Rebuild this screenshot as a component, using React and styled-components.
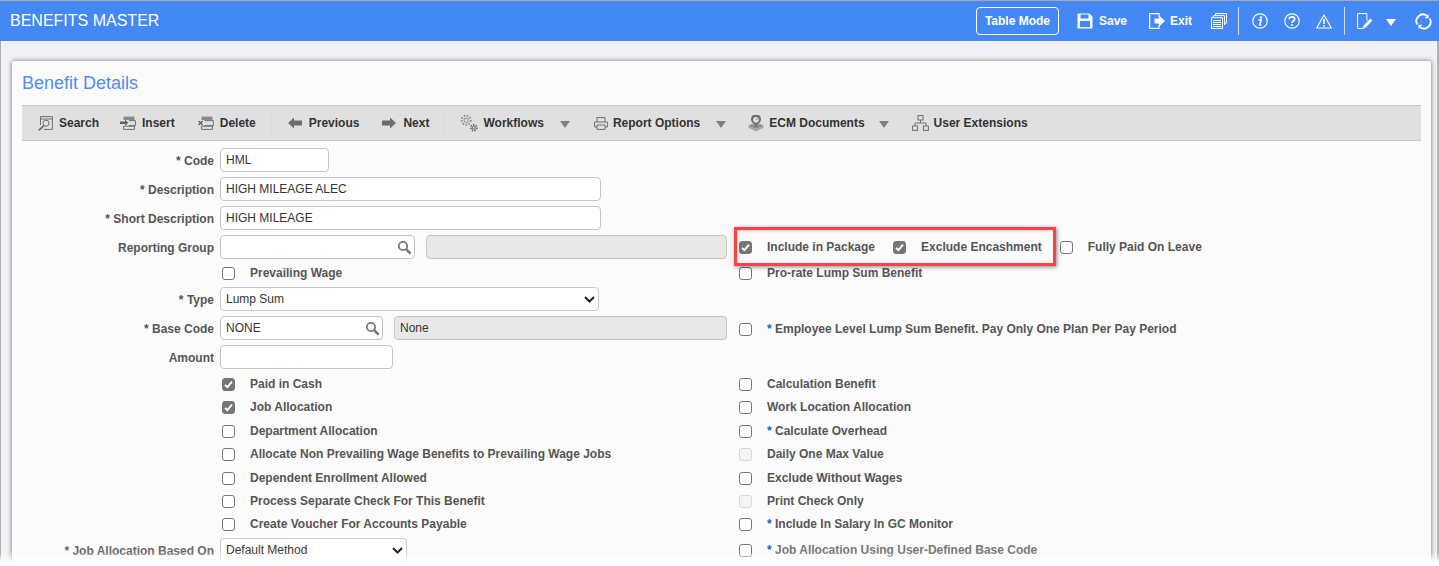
import React from "react";
import styled, { createGlobalStyle } from "styled-components";

const Global = createGlobalStyle`
  html, body { margin: 0; padding: 0; height: 100%; background: #f0f2f5; overflow: hidden; }
  body { font-family: "Liberation Sans", Arial, sans-serif; }
`;
const Page = styled.div`
  width: 1439px; height: 566px; overflow: hidden; position: relative;
  border-top: 1px solid #a8a8a8; box-sizing: border-box; background: #f0f2f5;
  box-shadow: inset 1px 0 #b0b0b0, inset -2px 0 #b0b0b0;
  &::after {
    content: ""; position: absolute; left: 0; right: 0; bottom: 0; height: 14px;
    background: linear-gradient(to bottom, rgba(255,255,255,0), #fff 75%);
  }
`;
const Header = styled.header`
  height: 40px; background: #4388f5; display: flex; align-items: center;
  padding: 0 7px 0 10px; color: #fff;
`;
const AppTitle = styled.h1`
  margin: 0; font-size: 16px; font-weight: 400; flex: 1;
`;
const TableButton = styled.button`
  height: 28px; width: 83px; box-sizing: border-box; border: 1px solid #fff; border-radius: 4px;
  background: transparent; color: #fff; font: bold 12px "Liberation Sans", Arial, sans-serif; padding: 0;
`;
const HeadAction = styled.span`
  display: inline-flex; align-items: center; gap: ${p => p.$gap ?? 6}px; margin-left: ${p => p.$ml ?? 0}px;
  font-size: 12px; font-weight: bold;
`;
const HeadSep = styled.span`
  width: 1px; height: 28px; background: #c9dafb; margin-left: ${p => p.$ml}px;
`;
const Card = styled.main`
  position: absolute; left: 12px; top: 60px; width: 1419px; height: 520px; box-sizing: border-box;
  background: #fbfbfb; border-radius: 2px; box-shadow: 0 0 5px rgba(0,0,0,.55); padding: 0 10px;
`;
const CardTitle = styled.h2`
  margin: 0; height: 44px; display: flex; align-items: center; font-size: 18px; font-weight: 400; color: #4f8bf7;
`;
const Toolbar = styled.nav`
  height: 36px; box-sizing: border-box; background: #e0e0e0; border-top: 1px solid #c6c6c6; border-bottom: 1px solid #c6c6c6;
  display: flex; align-items: center; padding-left: 16px; font-size: 12px; font-weight: bold; color: #333;
`;
const ToolItem = styled.span`
  display: inline-flex; align-items: center; gap: ${p => p.$gap ?? 6}px; margin-left: ${p => p.$ml ?? 0}px; white-space: nowrap;
`;
const ToolSep = styled.span`
  width: 1px; height: 32px; background: #d5dde6; margin-left: 15px;
`;
const Caret = styled.span`
  width: 0; height: 0; border-left: 5.5px solid transparent; border-right: 5.5px solid transparent;
  border-top: 7px solid ${p => p.$color || "#808080"}; margin-left: ${p => p.$ml}px; margin-top: 2px;
`;
const Form = styled.section`
  padding-top: 5px;
`;
const Row = styled.div`
  height: ${p => p.$h}px; display: grid; grid-template-columns: 192px 507px 1fr; column-gap: 6px; align-items: center;
`;
const Label = styled.label`
  text-align: right; font-size: 12px; font-weight: bold; color: ${p => p.$faded ? "#6a6a6a" : "#555"};
  white-space: nowrap; padding-top: 2px;
`;
const Star = styled.span`
  color: ${p => p.$blue ? "#1a5fc8" : "inherit"};
`;
const Field = styled.div`
  display: flex; align-items: center; gap: 11px; min-width: 0;
`;
const Input = styled.div`
  box-sizing: border-box; height: 24px; width: ${p => p.$w}px; flex: ${p => p.$w ? "none" : 1};
  border: 1px solid #c4c4c4; border-radius: 4px; background: ${p => p.$off ? "#e8e8e8" : "#fff"};
  font-size: 12px; color: #333; padding: 0 2px 0 5px; display: flex; align-items: center; justify-content: space-between;
  white-space: nowrap;
`;
const Select = styled.div`
  box-sizing: border-box; height: 24px; width: ${p => p.$w}px; border: 1px solid #c9c9c9; border-radius: 4px; background: #fff;
  font-size: 12px; color: #333; padding: 0 3px 0 5px; display: flex; align-items: center; justify-content: space-between;
`;
const RightCell = styled.div`
  display: flex; align-items: center; padding-left: 6px; min-width: 0; padding-top: ${p => p.$drop ?? 0}px;
`;
const Highlight = styled.div`
  display: flex; align-items: center; position: relative;
  &::after {
    content: ""; position: absolute; left: -5px; right: -14px; top: -13px; bottom: -12px;
    border: 3px solid #f9434a; box-shadow: 1px 1px 4px rgba(0,0,0,.45), inset 1px 1px 3px rgba(0,0,0,.2);
  }
`;
const CheckRow = styled.span`
  display: inline-flex; align-items: center; margin-left: ${p => p.$ml ?? 0}px;
  font-size: 12px; font-weight: bold; color: ${p => p.$dim ? "#777" : "#555"}; white-space: nowrap;
`;
const Box = styled.span`
  box-sizing: border-box; width: 13px; height: 13px; border-radius: 3px; flex: none; margin-right: 15px;
  border: 1px solid ${p => p.$checked ? "#767676" : p.$disabled ? "#d8d8d8" : "#767676"};
  background: ${p => p.$checked ? "#767676" : p.$disabled ? "#f4f4f4" : "#fff"};
  display: inline-flex; align-items: center; justify-content: center;
`;
const LeftChecks = styled.div`
  grid-column: 2; display: flex; align-items: center; padding-left: 2px;
`;

const Check = ({ checked, disabled, children, dim, ml }) => (
  <CheckRow $dim={dim} $ml={ml}>
    <Box $checked={checked} $disabled={disabled}>
      {checked && (
        <svg width="9" height="9" viewBox="0 0 9 9" fill="none"><path d="M1 4.8 3.4 7.2 8 1.6" stroke="#fff" strokeWidth="1.9" /></svg>
      )}
    </Box>
    <span>{children}</span>
  </CheckRow>
);

const Magnifier = ({ c = "#777" }) => (
  <svg width="15" height="15" viewBox="0 0 15 15" fill="none">
    <circle cx="6" cy="6" r="4.2" stroke={c} strokeWidth="1.8" /><path d="M9.3 9.3 13.6 13.6" stroke={c} strokeWidth="2.6" />
  </svg>
);
const Chevron = () => (
  <svg width="11" height="7" viewBox="0 0 11 7" fill="none"><path d="M1 1 5.5 5.5 10 1" stroke="#222" strokeWidth="2" /></svg>
);
const W = { fill: "none", stroke: "#fff", strokeWidth: 1.2 };
const SaveIcon = () => (
  <svg width="16" height="16" viewBox="0 0 16 16">
    <path d="M.5 1.5a1 1 0 0 1 1-1h11l3 3v11a1 1 0 0 1-1 1h-13a1 1 0 0 1-1-1z" fill="#fff" />
    <rect x="3.5" y="1.5" width="8" height="4" fill="#4388f5" /><rect x="3" y="8" width="10" height="6.2" fill="#4388f5" />
  </svg>
);
const ExitIcon = () => (
  <svg width="17" height="16" viewBox="0 0 17 16">
    <path d="M10 4V.7H.7v14.6H10V12" {...W} /><path d="M5.5 5.5h4.5V2.5l6 5.5-6 5.5v-3H5.5z" fill="#fff" />
  </svg>
);
const DocsIcon = () => (
  <svg width="16" height="16" viewBox="0 0 16 16" fill="none" stroke="#fff">
    <path d="M4.5 2.5V.6h11v9.5h-2" /><path d="M2.5 4V2.6h11V12" />
    <rect x=".5" y="4.6" width="11" height="10.8" fill="#4388f5" />
    <path d="M2 7.5h8M2 9.5h8M2 11.5h8M2 13.5h8" />
  </svg>
);
const InfoIcon = () => (
  <svg width="16" height="16" viewBox="0 0 16 16" fill="none">
    <circle cx="8" cy="8" r="7.2" stroke="#fff" strokeWidth="1.2" />
    <circle cx="9" cy="4.4" r="1.2" fill="#fff" /><path d="M6.4 7h2.8l-1.5 5h1.6" stroke="#fff" strokeWidth="1.5" />
  </svg>
);
const HelpIcon = () => (
  <svg width="16" height="16" viewBox="0 0 16 16" fill="none">
    <circle cx="8" cy="8" r="7.2" stroke="#fff" strokeWidth="1.2" />
    <path d="M5.3 6.2C5.3 3.2 10.7 3.2 10.7 6.1 10.7 8 8 8 8 10" stroke="#fff" strokeWidth="1.7" /><circle cx="8" cy="12" r="1.1" fill="#fff" />
  </svg>
);
const WarnIcon = () => (
  <svg width="16" height="15" viewBox="0 0 16 15" fill="none">
    <path d="M8 1 15.3 14H.7z" stroke="#fff" strokeWidth="1.1" /><path d="M8 5v5" stroke="#fff" strokeWidth="1.6" /><circle cx="8" cy="11.8" r=".9" fill="#fff" />
  </svg>
);
const EditIcon = () => (
  <svg width="16" height="16" viewBox="0 0 16 16" fill="none">
    <path d="M7 15.4H.6V.6h9.3v7" stroke="#fff" /><path d="M6 15.5 6.6 12.4 13.4 5.6 15.4 7.6 8.8 14.6z" fill="#fff" />
  </svg>
);
const RefreshIcon = () => (
  <svg width="17" height="17" viewBox="0 0 17 17" fill="none">
    <path d="M2.4 11.6A6.6 6.6 0 0 1 11.8 2.7" stroke="#fff" strokeWidth="1.8" />
    <path d="M14.6 5.4A6.6 6.6 0 0 1 5.2 14.3" stroke="#fff" strokeWidth="1.8" />
    <path d="M13.6 .9V5.3H9.6zM3.4 16.1V11.7H7.4z" fill="#fff" />
  </svg>
);
const G = { fill: "none", stroke: "#707070", strokeWidth: 1 };
const SearchTool = () => (
  <svg width="15" height="15" viewBox="0 0 15 15">
    <path d="M2.5 9V.6h11.9v12.8H6" {...G} /><path d="M2.5 3h11.9" {...G} /><circle cx="8" cy="7.2" r="3" {...G} /><path d="M5.8 9.6 .8 14.4" stroke="#707070" strokeWidth="1.8" />
  </svg>
);
const InsertTool = () => (
  <svg width="16" height="14" viewBox="0 0 16 14">
    <path d="M3.5 4V.6h11V4z" fill="#8a8a8a" /><path d="M3.5 10.2v3.2h11v-3.2z" {...G} />
    <path d="M0 5.6h5V3.8l3.4 3-3.4 3V8H0z" fill="#606060" /><path d="M9 4.6h6.4v5H9" {...G} />
  </svg>
);
const DeleteTool = () => (
  <svg width="16" height="14" viewBox="0 0 16 14">
    <path d="M3.5 4V.6h11V4z" fill="#8a8a8a" /><path d="M3.5 10.2v3.2h11v-3.2z" {...G} /><path d="M6.5 4.6h8.9v5H6.5" {...G} />
    <path d="M.6 5 4.6 9M4.6 5 .6 9" stroke="#606060" strokeWidth="1.3" />
  </svg>
);
const PrevArrow = () => (
  <svg width="14" height="12" viewBox="0 0 14 12"><path d="M0 6 6 .5V3.5h8v5H6v3z" fill="#6e6e6e" /></svg>
);
const NextArrow = () => (
  <svg width="14" height="12" viewBox="0 0 14 12"><path d="M14 6 8 .5V3.5H0v5h8v3z" fill="#6e6e6e" /></svg>
);
const Gears = () => (
  <svg width="18" height="18" viewBox="0 0 18 18" fill="none">
    <circle cx="6.2" cy="6.2" r="2.2" stroke="#8a8a8a" /><circle cx="6.2" cy="6.2" r="4.6" stroke="#8a8a8a" strokeWidth="1.8" strokeDasharray="1.6 1.5" />
    <circle cx="13.8" cy="13.8" r="1.5" stroke="#606060" /><circle cx="13.8" cy="13.8" r="3" stroke="#606060" strokeWidth="1.6" strokeDasharray="1.4 1.2" />
  </svg>
);
const Printer = () => (
  <svg width="14" height="13" viewBox="0 0 14 13" {...G}>
    <path d="M3 5V.6h8V5M3 10H.6V5h12.8v5H11" /><path d="M3 8h8v4.4H3z" />
  </svg>
);
const EcmIcon = () => (
  <svg width="16" height="17" viewBox="0 0 16 17">
    <path d="M.5 10.5 8 14 15.5 10.5 12 9 8 11 4 9z" fill="#8a8a8a" /><path d="M.5 12.8 8 16.5 15.5 12.8V10.5L8 14 .5 10.5z" fill="#a5a5a5" />
    <path d="M8 12 4.2 7.5a5 5 0 1 1 7.6 0z" fill="#707070" /><circle cx="8" cy="4.8" r="2.8" fill="#e6e6e6" /><path d="M8 4.8 9.6 3.2" stroke="#555" />
  </svg>
);
const Tree = () => (
  <svg width="17" height="16" viewBox="0 0 17 16" {...G}>
    <rect x="6" y=".6" width="5" height="4.4" /><rect x=".6" y="11" width="5" height="4.4" /><rect x="11.4" y="11" width="5" height="4.4" />
    <path d="M8.5 5v3M3 11V8h11v3" />
  </svg>
);

const Req = ({ children, blue }) => <><Star $blue={blue}>*</Star> {children}</>;

export default function App() {
  return (
    <Page>
      <Global />
      <Header>
        <AppTitle>BENEFITS MASTER</AppTitle>
        <TableButton>Table Mode</TableButton>
        <HeadAction $ml={18}><SaveIcon />Save</HeadAction>
        <HeadAction $ml={22} $gap={4}><ExitIcon />Exit</HeadAction>
        <HeadAction $ml={19}><DocsIcon /></HeadAction>
        <HeadSep $ml={11} />
        <HeadAction $ml={13}><InfoIcon /></HeadAction>
        <HeadAction $ml={16}><HelpIcon /></HeadAction>
        <HeadAction $ml={16}><WarnIcon /></HeadAction>
        <HeadSep $ml={12} />
        <HeadAction $ml={12}><EditIcon /></HeadAction>
        <Caret $color="#fff" $ml={13} />
        <HeadAction $ml={19}><RefreshIcon /></HeadAction>
      </Header>
      <Card>
        <CardTitle>Benefit Details</CardTitle>
        <Toolbar>
          <ToolItem><SearchTool />Search</ToolItem>
          <ToolItem $ml={21}><InsertTool />Insert</ToolItem>
          <ToolItem $ml={23}><DeleteTool />Delete</ToolItem>
          <ToolSep />
          <ToolItem $ml={16} $gap={7}><PrevArrow />Previous</ToolItem>
          <ToolItem $ml={23} $gap={7}><NextArrow />Next</ToolItem>
          <ToolSep />
          <ToolItem $ml={15} $gap={5}><Gears />Workflows</ToolItem>
          <Caret $ml={16} />
          <ToolItem $ml={24} $gap={5}><Printer />Report Options</ToolItem>
          <Caret $ml={16} />
          <ToolItem $ml={22} $gap={5}><EcmIcon />ECM Documents</ToolItem>
          <Caret $ml={14} />
          <ToolItem $ml={23} $gap={5}><Tree />User Extensions</ToolItem>
        </Toolbar>
        <Form>
          <Row $h={28}>
            <Label><Req>Code</Req></Label>
            <Field><Input $w={109}>HML</Input></Field>
          </Row>
          <Row $h={30}>
            <Label><Req>Description</Req></Label>
            <Field><Input $w={381}>HIGH MILEAGE ALEC</Input></Field>
          </Row>
          <Row $h={28}>
            <Label><Req>Short Description</Req></Label>
            <Field><Input $w={381}>HIGH MILEAGE</Input></Field>
          </Row>
          <Row $h={30}>
            <Label>Reporting Group</Label>
            <Field><Input $w={195}><span /><Magnifier /></Input><Input $off /></Field>
            <RightCell>
              <Highlight>
                <Check checked>Include in Package</Check>
                <Check checked ml={18}>Exclude Encashment</Check>
              </Highlight>
              <Check ml={18}>Fully Paid On Leave</Check>
            </RightCell>
          </Row>
          <Row $h={22}>
            <LeftChecks><Check>Prevailing Wage</Check></LeftChecks>
            <RightCell><Check>Pro-rate Lump Sum Benefit</Check></RightCell>
          </Row>
          <Row $h={30}>
            <Label><Req>Type</Req></Label>
            <Field><Select $w={379}>Lump Sum<Chevron /></Select></Field>
          </Row>
          <Row $h={28}>
            <Label><Req>Base Code</Req></Label>
            <Field><Input $w={163}>NONE<Magnifier /></Input><Input $off>None</Input></Field>
            <RightCell $drop={2}><Check><Req blue>Employee Level Lump Sum Benefit. Pay Only One Plan Per Pay Period</Req></Check></RightCell>
          </Row>
          <Row $h={30}>
            <Label>Amount</Label>
            <Field><Input $w={173} /></Field>
          </Row>
          <Row $h={24}>
            <LeftChecks><Check checked>Paid in Cash</Check></LeftChecks>
            <RightCell><Check>Calculation Benefit</Check></RightCell>
          </Row>
          <Row $h={22}>
            <LeftChecks><Check checked>Job Allocation</Check></LeftChecks>
            <RightCell><Check>Work Location Allocation</Check></RightCell>
          </Row>
          <Row $h={26}>
            <LeftChecks><Check>Department Allocation</Check></LeftChecks>
            <RightCell><Check><Req blue>Calculate Overhead</Req></Check></RightCell>
          </Row>
          <Row $h={20}>
            <LeftChecks><Check>Allocate Non Prevailing Wage Benefits to Prevailing Wage Jobs</Check></LeftChecks>
            <RightCell><Check disabled>Daily One Max Value</Check></RightCell>
          </Row>
          <Row $h={28}>
            <LeftChecks><Check>Dependent Enrollment Allowed</Check></LeftChecks>
            <RightCell><Check>Exclude Without Wages</Check></RightCell>
          </Row>
          <Row $h={18}>
            <LeftChecks><Check>Process Separate Check For This Benefit</Check></LeftChecks>
            <RightCell><Check disabled>Print Check Only</Check></RightCell>
          </Row>
          <Row $h={28}>
            <LeftChecks><Check>Create Voucher For Accounts Payable</Check></LeftChecks>
            <RightCell><Check><Req blue>Include In Salary In GC Monitor</Req></Check></RightCell>
          </Row>
          <Row $h={24}>
            <Label $faded><Req>Job Allocation Based On</Req></Label>
            <Field><Select $w={187}>Default Method<Chevron /></Select></Field>
            <RightCell><Check dim><Req blue>Job Allocation Using User-Defined Base Code</Req></Check></RightCell>
          </Row>
        </Form>
      </Card>
    </Page>
  );
}
